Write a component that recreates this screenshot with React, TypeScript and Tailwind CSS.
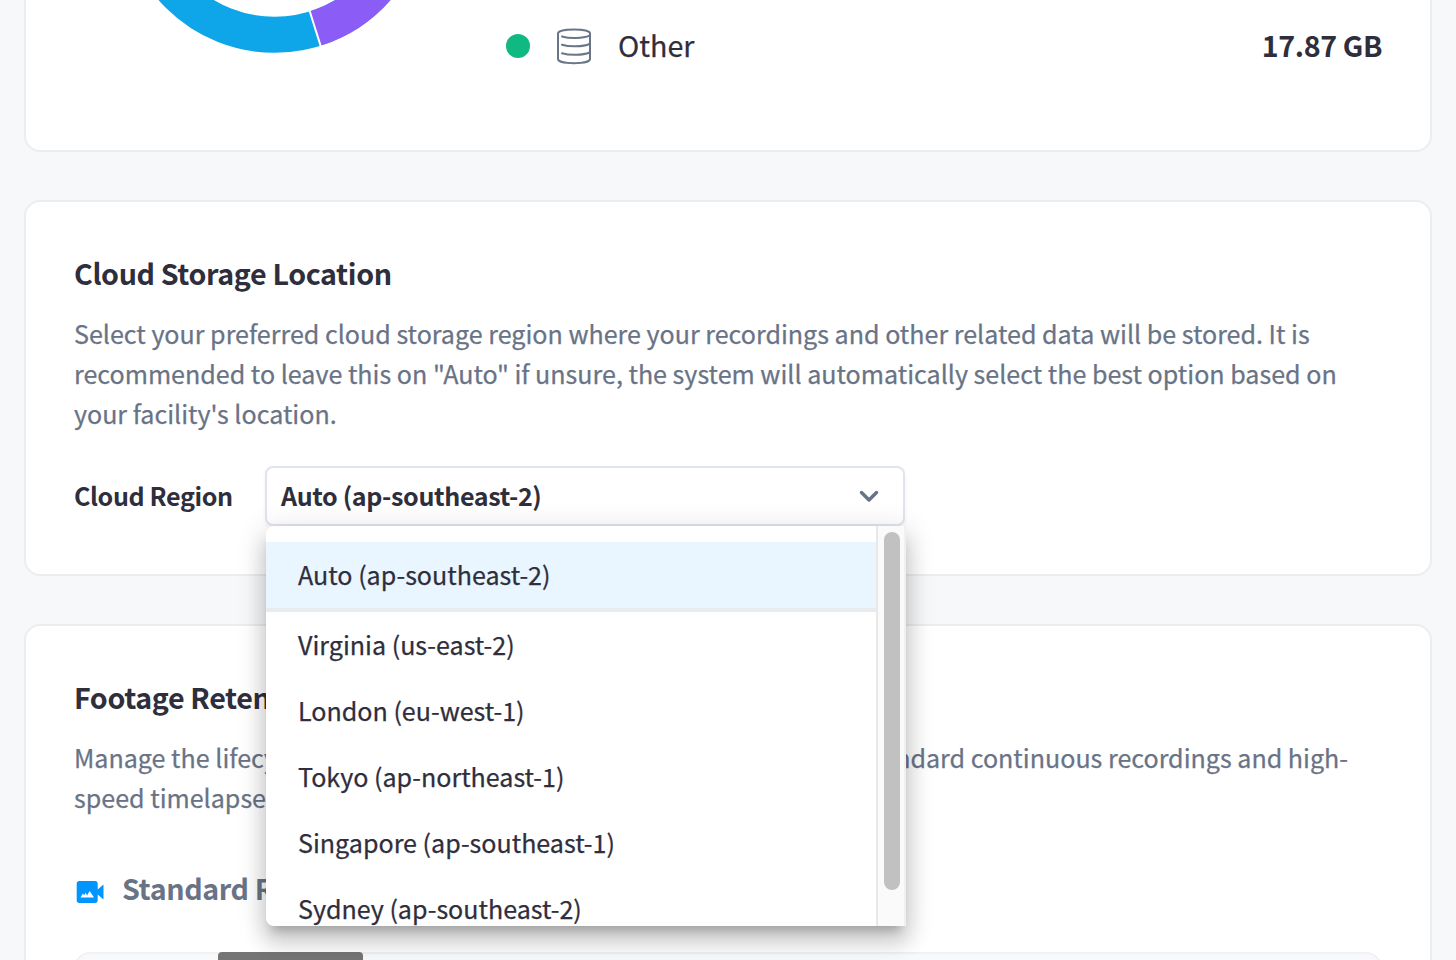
import { useState } from "react";

const regions = [
    "Auto (ap-southeast-2)",
    "Virginia (us-east-2)",
    "London (eu-west-1)",
    "Tokyo (ap-northeast-1)",
    "Singapore (ap-southeast-1)",
    "Sydney (ap-southeast-2)",
];

function UsageChart() {
    return (
        <svg className="shrink-0" width="310" height="54" viewBox="0 0 310 54">
            <g transform="translate(155.500 -101)">
                <circle r="135.800" fill="none" stroke="#0ea5e9" strokeWidth="36" />
                <path d="M40.700 129.600A135.800 135.800 0 0 0 135.800 0" fill="none" stroke="#8b5cf6" strokeWidth="36" />
                <path d="M34.600 110.200L47.100 150" stroke="#fff" strokeWidth="2" />
            </g>
        </svg>
    )
}

function DatabaseIcon() {
    return (
        <svg width="36" height="38" viewBox="0 0 36 38" fill="none" stroke="#6b7588" strokeWidth="2" strokeLinecap="round">
            <path d="M2 6.500c0-2.400 6.500-4 16-4s16 1.600 16 4v25.500c0 2.400-6.500 4.200-16 4.200s-16-1.800-16-4.200z" />
            <path d="M6 9.500c7 2.200 21 2.200 27.500-.8M6 17.800c7 2.200 21 2.200 27.500-.8M6 26.300c7 2.200 21 2.200 27.500-.8" />
        </svg>
    )
}

export default function StorageSettings() {
    const [selected, setSelected] = useState(regions[0]);
    const [open, setOpen] = useState(true);

    return (
        <div className="flex h-[960px] w-[1456px] flex-col gap-12 overflow-hidden bg-[#f7f8fa] px-6 font-['Noto_Sans_CJK_SC',sans-serif] text-[25.07px] text-[#2f2e3c]">
            {/* usage */}
            <section className="flex h-[152px] shrink-0 items-start rounded-b-2xl border-2 border-t-0 border-[#ebedf0] bg-white pr-12 pl-[93px]">
                <UsageChart />
                <div className="ml-[77px] flex h-[92px] flex-1 items-center text-[28.65px]">
                    <span className="size-6 rounded-full bg-[#10b981]" />
                    <span className="ml-[26px]"><DatabaseIcon /></span>
                    <span className="ml-[26px] pb-0.5 [-webkit-text-stroke:0.25px]">Other</span>
                    <span className="ml-auto pb-0.5 font-bold tracking-[-0.4px]">17.87 GB</span>
                </div>
            </section>

            {/* location */}
            <section className="h-[376px] shrink-0 rounded-2xl border-2 border-[#ebedf0] bg-white px-12 pt-[47px]">
                <h2 className="text-[28.65px] leading-[48px] font-bold tracking-[-0.37px]">Cloud Storage Location</h2>
                <p className="mt-4 leading-10 text-[#697386] [-webkit-text-stroke:0.25px]">
                    Select your preferred cloud storage region where your recordings and other related data will be stored. It is<br />
                    recommended to leave this on "Auto" if unsure, the system will automatically select the best option based on<br />
                    your facility's location.
                </p>
                <div className="mt-[33px] flex items-center font-bold">
                    <label className="w-[191px] tracking-[-0.37px]">Cloud Region</label>
                    <div className="relative w-[640px]">
                        <button className="flex h-[60px] w-full items-center justify-between rounded-lg border-2 border-[#e0e4ec] bg-white pr-6 pl-3.5 tracking-[-0.35px] shadow-[0_2px_4px_rgba(0,0,0,0.06)]" onClick={() => setOpen(!open)}>
                            {selected}
                            <svg width="20" height="14" viewBox="0 0 20 14" fill="none" stroke="#697386" strokeWidth="3.4" strokeLinecap="round" strokeLinejoin="round">
                                <path d="M2.500 3.500L10 11L17.500 3.500" />
                            </svg>
                        </button>
                        {open && (
                            <div className="absolute top-[60px] left-px z-10 flex h-[400px] w-[640px] overflow-hidden rounded-l-lg bg-white font-normal shadow-[0_10px_10px_-6px_rgba(0,0,0,0.2),0_16px_20px_2px_rgba(0,0,0,0.14),0_6px_28px_4px_rgba(0,0,0,0.12)] [-webkit-text-stroke:0.25px]">
                                <ul className="flex-1 pt-4">
                                    {regions.map((region, i) => (
                                        <li
                                            key={region}
                                            onClick={() => setSelected(region)}
                                            className={i === 0 ? "box-content h-[66px] border-b-4 border-[#e9ecef] bg-[#e9f6ff] px-8 leading-[64px]" : "h-[66px] px-8 leading-[64px]"}
                                        >
                                            {region}
                                        </li>
                                    ))}
                                </ul>
                                <div className="w-[30px] border-x-2 border-l-[#e8e8e8] border-r-[#f0f0f0] bg-[#fafafa] pt-1.5 pl-1.5">
                                    <div className="h-[358px] w-4 rounded-full bg-[#c1c1c1]" />
                                </div>
                            </div>
                        )}
                    </div>
                </div>
            </section>

            {/* retention */}
            <section className="h-[400px] shrink-0 rounded-2xl border-2 border-[#ebedf0] bg-white px-12 pt-[47px]">
                <h2 className="text-[28.65px] leading-[48px] font-bold tracking-[-0.37px]">Footage Retention</h2>
                <div className="mt-4 flex justify-between leading-10 text-[#697386] [-webkit-text-stroke:0.25px]">
                    <p>Manage the lifecycle<br />speed timelapse</p>
                    <p className="mr-[34px]">standard continuous recordings and high-</p>
                </div>
                <div className="mt-12 flex h-12 items-center text-[28.65px] font-bold text-[#697386]">
                    <svg className="mt-1.5 ml-0.5" width="28" height="24" viewBox="0 0 28 24">
                        <path d="M3.200 1h15.800a2.700 2.700 0 0 1 2.700 2.700v5.800l5.800-5v15l-5.800-5v5.800a2.700 2.700 0 0 1-2.700 2.700H3.400a2.700 2.700 0 0 1-2.700-2.700V3.700A2.700 2.700 0 0 1 3.400 1z" fill="#0095ff" />
                        <path d="M4.500 17.500l2.400-4 1.200 1.800 1.500-2.600 1.500 2.800 2.600-4.500 4.300 6.500z" fill="#fff" />
                    </svg>
                    <h3 className="ml-[18px] pb-0.5 tracking-[-0.37px]">Standard Recordings</h3>
                </div>
                <div className="mt-[39px] h-40 rounded-2xl border-2 border-[#f0f1f3] bg-[#f8f9fb]">
                    <div className="-mt-0.5 ml-[142px] h-12 w-[145px] rounded bg-[#757575]" />
                </div>
            </section>
        </div>
    )
}
